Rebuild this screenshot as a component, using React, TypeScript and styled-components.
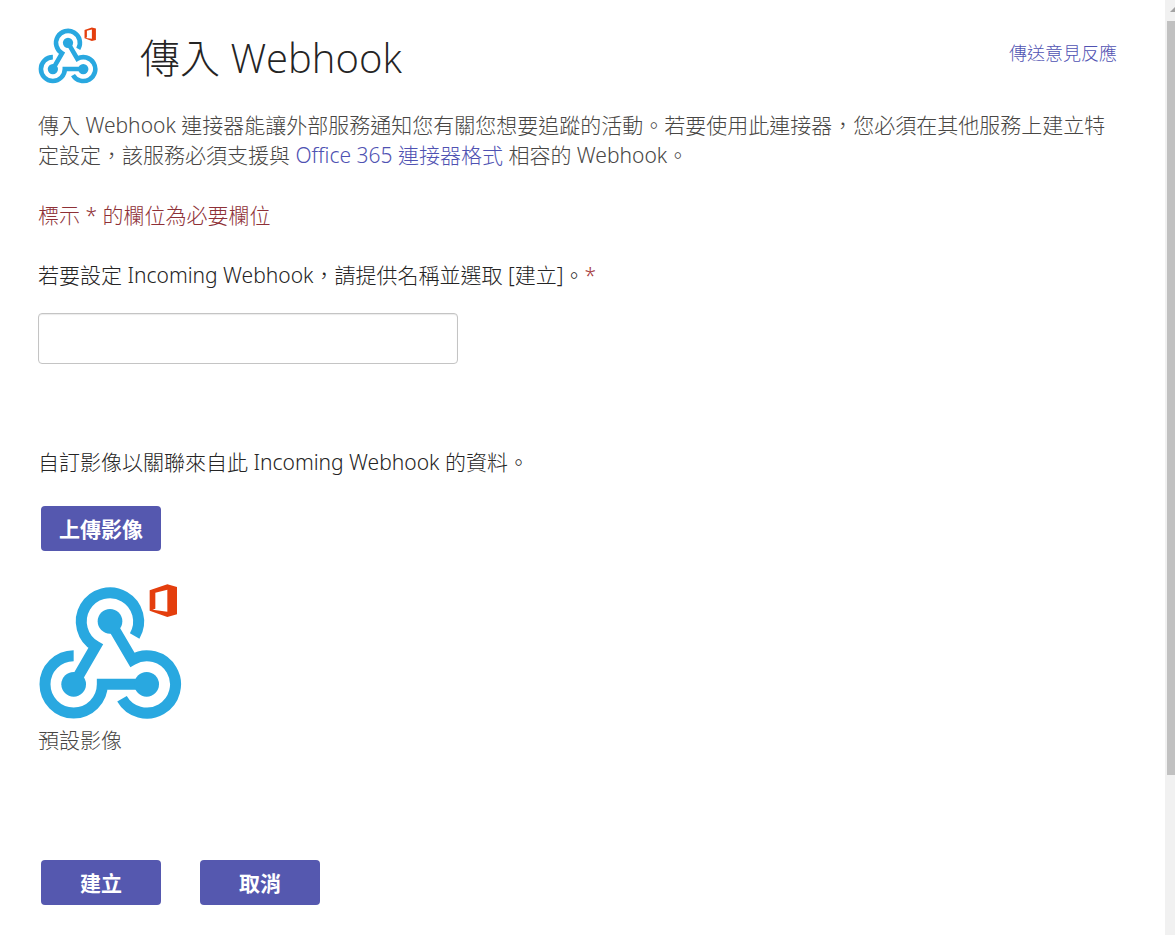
import React from "react";
import styled, { createGlobalStyle } from "styled-components";

const GlobalStyle = createGlobalStyle`
  *, *::before, *::after { box-sizing: border-box; }
  body {
    margin: 0;
    background: #fff;
    color: #252424;
    font: 300 21px/30px "Noto Sans", "Noto Sans CJK TC", sans-serif;
  }
`;

const Page = styled.div`
  display: flex;
  min-height: 100vh;
`;

const Content = styled.main`
  flex: 1;
  min-width: 0;
  padding: 26px 48px 30px 38px;
`;

const Header = styled.header`
  display: flex;
  align-items: flex-start;
  gap: 42px;
`;

const Title = styled.h1`
  flex: 1;
  margin: 0;
  font-family: "Open Sans", "Noto Sans CJK TC", sans-serif;
  font-size: 40px;
  line-height: 64px;
  font-weight: 300;
`;

const Link = styled.a`
  color: #4f52b2;
  text-decoration: none;
`;

const FeedbackLink = styled(Link)`
  padding-top: 12px;
  font-size: 18px;
`;

const Intro = styled.p`
  margin: 20px 0 0;
  padding-right: 8px;
  color: #484644;
`;

const RequiredNote = styled.p`
  margin: 30px 0;
  color: #8e3036;
`;

const Star = styled.span`
  color: #a4373a;
`;

const Field = styled.div`
  display: flex;
  flex-direction: column;
  align-items: flex-start;
  gap: 23px;
`;

const NameInput = styled.input`
  width: 420px;
  max-width: 100%;
  height: 51px;
  padding: 0 12px;
  border: 1px solid #c4c4c4;
  border-radius: 4px;
  box-shadow: inset 0 1px 1px rgba(0, 0, 0, 0.08);
  font: inherit;
`;

const ImageSection = styled.section`
  margin-top: 83px;
`;

const Text = styled.p`
  margin: 0;
`;

const Button = styled.button`
  width: 120px;
  height: 45px;
  padding: 0;
  border: 0;
  border-radius: 4px;
  background: #5558af;
  color: #fff;
  font: inherit;
  font-weight: 700;
`;

const UploadRow = styled.div`
  display: flex;
  margin: 29px 3px 30px;
`;

const Preview = styled.figure`
  margin: 0;
  color: #484644;
`;

const Actions = styled.div`
  display: flex;
  gap: 39px;
  margin: 105px 3px 0;
`;

const Logo = styled.svg<{ $size: number }>`
  display: block;
  flex: none;
  width: ${(p) => p.$size}px;
  height: ${(p) => p.$size}px;
`;

const ScrollTrack = styled.div`
  display: flex;
  flex-direction: column;
  align-items: flex-end;
  width: 10px;
  background: #f1f1f1;
`;

const ScrollArrow = styled.svg`
  display: block;
  flex: none;
  width: 10px;
  height: 21px;
`;

const ScrollThumb = styled.div`
  width: 8px;
  flex: 754;
  background: #c1c1c1;
`;

const ScrollRest = styled.div`
  flex: 160;
`;

function WebhookLogo({ size }: { size: number }) {
  return (
    <Logo $size={size} viewBox="24 18 432 432" aria-hidden="true">
      <g fill="none" stroke="#29a8e0" strokeWidth="33">
        <path d="M314 183A86 86 0 1 0 197 214L131 328" />
        <path d="M131 242A86 86 0 1 0 217 328L350 328" />
        <path d="M276 371A86 86 0 1 0 307 254L240 140" />
      </g>
      <g fill="#29a8e0">
        <circle cx="240" cy="139" r="37" />
        <circle cx="131" cy="328" r="37" />
        <circle cx="350" cy="328" r="37" />
      </g>
      <path
        fill="#e43e0d"
        fillRule="evenodd"
        d="M359 46L412 28L441 36V118L412 126L359 107L368 104L412 110V44L376 53V101L359 107Z"
      />
    </Logo>
  );
}

export default function App() {
  return (
    <Page>
      <GlobalStyle />
      <Content>
        <Header>
          <WebhookLogo size={60} />
          <Title>傳入 Webhook</Title>
          <FeedbackLink href="#feedback">傳送意見反應</FeedbackLink>
        </Header>
        <Intro>
          傳入 Webhook 連接器能讓外部服務通知您有關您想要追蹤的活動。若要使用此連接器，您必須在其他服務上建立特定設定，該服務必須支援與{" "}
          <Link href="#format">Office 365 連接器格式</Link> 相容的 Webhook。
        </Intro>
        <RequiredNote>標示 * 的欄位為必要欄位</RequiredNote>
        <Field>
          <label htmlFor="webhook-name">
            若要設定 Incoming Webhook，請提供名稱並選取 [建立]。<Star>*</Star>
          </label>
          <NameInput id="webhook-name" type="text" required />
        </Field>
        <ImageSection>
          <Text>自訂影像以關聯來自此 Incoming Webhook 的資料。</Text>
          <UploadRow>
            <Button type="button">上傳影像</Button>
          </UploadRow>
          <Preview>
            <WebhookLogo size={144} />
            <figcaption>預設影像</figcaption>
          </Preview>
        </ImageSection>
        <Actions>
          <Button type="submit">建立</Button>
          <Button type="button">取消</Button>
        </Actions>
      </Content>
      <ScrollTrack aria-hidden="true">
        <ScrollArrow viewBox="0 0 10 21">
          <path d="M5 12L10 7V12Z" fill="#a3a3a3" />
        </ScrollArrow>
        <ScrollThumb />
        <ScrollRest />
      </ScrollTrack>
    </Page>
  );
}
